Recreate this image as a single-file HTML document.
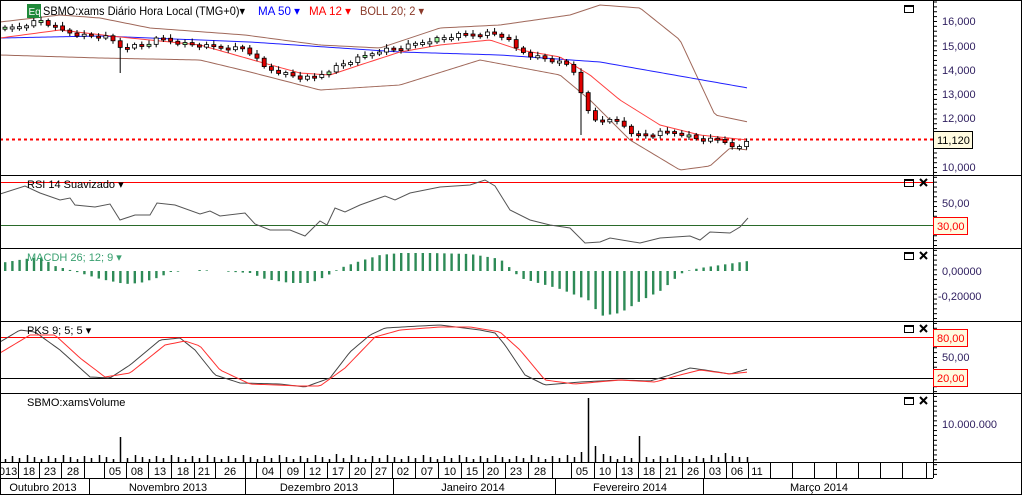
<!DOCTYPE html>
<html><head><meta charset="utf-8"><style>
html,body{margin:0;padding:0;background:#fff;width:1022px;height:495px;overflow:hidden}
svg{display:block;font-family:"Liberation Sans",sans-serif}
</style></head><body>
<svg id="s" width="1022" height="495" viewBox="0 0 1022 495" xmlns="http://www.w3.org/2000/svg">
<rect x="0" y="0" width="1022" height="495" fill="#fff"/>
<g id="g"></g>
<g stroke="#000" stroke-width="1" fill="none" shape-rendering="crispEdges">
<rect x="0.5" y="0.5" width="1021" height="494"/>
<line x1="933.5" y1="0" x2="933.5" y2="478"/>
<line x1="0" y1="175.5" x2="1022" y2="175.5"/>
<line x1="0" y1="248.5" x2="1022" y2="248.5"/>
<line x1="0" y1="321.5" x2="1022" y2="321.5"/>
<line x1="0" y1="393.5" x2="1022" y2="393.5"/>
<line x1="0" y1="462.5" x2="1022" y2="462.5"/>
<line x1="0" y1="478.5" x2="933" y2="478.5"/>
<line x1="0" y1="494.5" x2="933" y2="494.5"/>
</g>
<rect x="27" y="4" width="14" height="14" fill="#1f8a3a"/>
<text x="28.5" y="15" font-size="10" fill="#fff">Eq</text>
<text x="43" y="15" font-size="12" fill="#000" textLength="202" lengthAdjust="spacingAndGlyphs">SBMO:xams Diário Hora Local (TMG+0)▾</text>
<text x="258" y="15" font-size="12" fill="#0000ff" textLength="42" lengthAdjust="spacingAndGlyphs">MA 50 ▾</text>
<text x="309" y="15" font-size="12" fill="#ff0000" textLength="42" lengthAdjust="spacingAndGlyphs">MA 12 ▾</text>
<text x="360" y="15" font-size="12" fill="#8b3a2a" textLength="64" lengthAdjust="spacingAndGlyphs">BOLL 20; 2 ▾</text>
<text x="27" y="188" font-size="11" fill="#000">RSI 14 Suavizado ▾</text>
<text x="27" y="261" font-size="11" fill="#3aa070">MACDH 26; 12; 9 ▾</text>
<text x="27" y="334" font-size="11" fill="#000">PKS 9; 5; 5 ▾</text>
<text x="27" y="406" font-size="11" fill="#000">SBMO:xamsVolume</text>
<g fill="none" stroke="#000" stroke-width="1" shape-rendering="crispEdges">
<rect x="904.5" y="5.5" width="9" height="7"/><line x1="904" y1="6.5" x2="914" y2="6.5"/>
<rect x="904.5" y="179.5" width="9" height="7"/><line x1="904" y1="180.5" x2="914" y2="180.5"/>
<rect x="904.5" y="252.5" width="9" height="7"/><line x1="904" y1="253.5" x2="914" y2="253.5"/>
<rect x="904.5" y="325.5" width="9" height="7"/><line x1="904" y1="326.5" x2="914" y2="326.5"/>
<rect x="904.5" y="397.5" width="9" height="7"/><line x1="904" y1="398.5" x2="914" y2="398.5"/>
</g>
<g stroke="#000" stroke-width="2">
<path d="M920 179l7 7M927 179l-7 7"/><path d="M920 252l7 7M927 252l-7 7"/><path d="M920 325l7 7M927 325l-7 7"/><path d="M920 397l7 7M927 397l-7 7"/>
</g>
<g font-size="11" fill="#302060">
<text x="942" y="25">16,000</text><text x="942" y="50">15,000</text><text x="942" y="74">14,000</text>
<text x="942" y="98">13,000</text><text x="942" y="122">12,000</text><text x="942" y="171">10,000</text>
<text x="942" y="207">50,00</text>
<text x="942" y="275">0,00000</text><text x="938" y="300">-0,20000</text>
<text x="942" y="361">50,00</text>
<text x="942" y="428">10.000.000</text>
</g>
<rect x="933.5" y="131.5" width="39" height="17" fill="#fffbe0" stroke="#000"/>
<text x="937" y="144" font-size="11" fill="#000">11,120</text>
<rect x="933.5" y="217.5" width="34" height="17" fill="#fffbe0" stroke="#f00"/>
<text x="937" y="230" font-size="11" fill="#f00">30,00</text>
<rect x="933.5" y="329.5" width="34" height="17" fill="#fffbe0" stroke="#f00"/>
<text x="937" y="342" font-size="11" fill="#f00">80,00</text>
<rect x="933.5" y="369.5" width="34" height="17" fill="#fffbe0" stroke="#f00"/>
<text x="937" y="382" font-size="11" fill="#f00">20,00</text>
<g font-size="11" fill="#000" text-anchor="middle">
<text x="8" y="475">013</text><text x="29" y="475">18</text><text x="50" y="475">23</text><text x="73" y="475">28</text>
<text x="115" y="475">05</text><text x="137" y="475">08</text><text x="160" y="475">13</text><text x="183" y="475">18</text>
<text x="204" y="475">21</text><text x="230" y="475">26</text><text x="268" y="475">04</text><text x="293" y="475">09</text>
<text x="315" y="475">12</text><text x="338" y="475">17</text><text x="360" y="475">20</text><text x="381" y="475">27</text>
<text x="403" y="475">02</text><text x="427" y="475">07</text><text x="450" y="475">10</text><text x="472" y="475">15</text>
<text x="493" y="475">20</text><text x="516" y="475">23</text><text x="540" y="475">28</text><text x="582" y="475">05</text>
<text x="605" y="475">10</text><text x="627" y="475">13</text><text x="649" y="475">18</text><text x="671" y="475">21</text>
<text x="693" y="475">26</text><text x="715" y="475">03</text><text x="737" y="475">06</text><text x="757" y="475">11</text>
<text x="43" y="491">Outubro 2013</text><text x="168" y="491">Novembro 2013</text><text x="319" y="491">Dezembro 2013</text>
<text x="473" y="491">Janeiro 2014</text><text x="630" y="491">Fevereiro 2014</text><text x="819" y="491">Março 2014</text>
</g>
<g stroke="#000" shape-rendering="crispEdges">
<line x1="89.5" y1="478" x2="89.5" y2="494"/><line x1="245.5" y1="478" x2="245.5" y2="494"/>
<line x1="393.5" y1="478" x2="393.5" y2="494"/><line x1="555.5" y1="478" x2="555.5" y2="494"/>
<line x1="703.5" y1="478" x2="703.5" y2="494"/>
</g>
</svg>
<script>
(function(){
var NS="http://www.w3.org/2000/svg",g=document.getElementById("g");
function el(t,a){var e=document.createElementNS(NS,t);for(var k in a)e.setAttribute(k,a[k]);g.appendChild(e);return e;}
function interp(pts,x){for(var j=1;j<pts.length;j++){if(x<=pts[j][0]){var a=pts[j-1],b=pts[j];return a[1]+(b[1]-a[1])*(x-a[0])/(b[0]-a[0]);}}return pts[pts.length-1][1];}
function line(pts,col,w){el("polyline",{points:pts.map(function(p){return p.join(",")}).join(" "),fill:"none",stroke:col,"stroke-width":w||1});}
function smooth(pts,col,w){var a=[];for(var x=0;x<=748;x+=3)a.push([x,interp(pts,x)]);line(a,col,w);}
var sx=[18,39,61,84,104,126,148,171,194,215,245,256,280,304,327,349,371,392,415,438,461,483,505,528,552,571,594,616,638,660,682,704,726,748,770,792,814,836,858,880,902,926];
sx.forEach(function(x){el("line",{x1:x+.5,y1:462,x2:x+.5,y2:478,stroke:"#000","shape-rendering":"crispEdges"});});
var cl=[[0,30],[20,26],[40,20],[60,30],[80,35],[100,37],[110,38],[118,47],[130,46],[145,45],[160,38],[180,43],[200,46],[230,48],[245,48],[255,58],[265,68],[280,72],[300,78],[315,78],[325,72],[340,65],[360,58],[380,50],[400,48],[430,40],[460,35],[490,33],[505,37],[515,48],[530,55],[550,60],[570,66],[578,78],[585,108],[595,120],[620,122],[635,135],[650,135],[665,132],[680,133],[700,140],[720,140],[740,148],[748,140]];
el("line",{x1:0,y1:139.5,x2:933,y2:139.5,stroke:"#f00","stroke-width":2,"stroke-dasharray":"3,3"});
smooth([[0,22],[60,15],[100,18],[150,28],[245,35],[320,45],[380,48],[440,28],[500,25],[570,15],[600,5],[640,8],[680,40],[715,115],[748,122]],"#a0685a");
smooth([[0,55],[100,58],[200,60],[250,72],[320,90],[400,85],[480,60],[560,75],[590,100],[630,140],[680,170],[710,166],[730,148],[748,150]],"#a0685a");
smooth([[0,38],[100,36],[250,42],[400,52],[500,55],[600,62],[748,88]],"#2020ff");
smooth([[0,38],[60,30],[120,37],[200,45],[260,62],[300,73],[330,75],[360,65],[400,52],[440,45],[490,40],[520,50],[560,57],[590,75],[620,100],[660,125],[700,135],[748,140]],"#ff4040");
var prev=interp(cl,0)-2,i,x,cy,o,tp,h;
for(i=0;i<104;i++){x=5+i*7.2;if(x>750)break;cy=interp(cl,x)+((i*37)%7-3)*0.6;o=prev;tp=Math.min(o,cy);h=Math.max(Math.abs(cy-o),2);
el("line",{x1:x,y1:tp-2-(i%3),x2:x,y2:tp+h+2+(i%2),stroke:"#000"});
if(x>115&&x<121){el("line",{x1:x,y1:tp,x2:x,y2:73,stroke:"#000"});}
if(x>580&&x<588){el("line",{x1:x,y1:tp,x2:x,y2:135,stroke:"#000"});}
el("rect",{x:x-2,y:tp,width:4,height:h,fill:cy>o?"#e00000":(i%5==0?"#a0ffa0":"#fff"),stroke:"#000","stroke-width":0.8});prev=cy;}
el("line",{x1:0,y1:182.5,x2:933,y2:182.5,stroke:"#f00"});
el("line",{x1:0,y1:225.5,x2:933,y2:225.5,stroke:"#2a6a2a"});
line([[0,194],[25,186],[40,193],[60,200],[70,198],[75,205],[95,207],[110,204],[120,220],[135,215],[150,215],[157,203],[175,205],[200,214],[210,211],[220,216],[245,213],[255,224],[270,230],[290,230],[305,236],[320,221],[327,225],[335,208],[345,212],[360,205],[385,196],[395,200],[410,193],[440,187],[470,185],[485,180],[495,186],[510,210],[530,220],[550,225],[570,228],[585,243],[600,242],[610,238],[640,243],[660,238],[690,236],[700,240],[710,232],[730,233],[740,227],[748,218]],"#555");
var mh=[[0,-8],[25,-12],[40,-14],[55,-5],[70,-1],[80,2],[100,8],[125,13],[140,12],[160,6],[170,1],[192,0],[200,-1],[250,2],[265,8],[290,12],[310,12],[320,8],[330,3],[340,-3],[360,-10],[380,-16],[400,-18],[430,-18],[470,-17],[500,-12],[510,-3],[520,7],[560,18],[590,30],[600,45],[620,42],[640,30],[660,20],[670,12],[680,3],[690,-1],[700,-3],[748,-10]];
for(i=0;i<104;i++){x=5+i*7.2;if(x>750)break;var v=interp(mh,x);if(Math.abs(v)<0.5)continue;el("rect",{x:x-1,y:Math.min(271,271+v),width:2.4,height:Math.abs(v),fill:"#2e8b57"});}
el("line",{x1:0,y1:337.5,x2:933,y2:337.5,stroke:"#f00"});
el("line",{x1:0,y1:378.5,x2:933,y2:378.5,stroke:"#000"});
smooth([[0,342],[20,330],[35,332],[60,350],[90,377],[110,378],[130,365],[160,340],[180,338],[195,350],[215,375],[240,383],[280,384],[305,387],[330,378],[350,352],[370,335],[385,328],[420,326],[440,325],[480,330],[495,333],[505,345],[525,375],[545,385],[580,382],[620,380],[650,381],[670,375],[690,368],[705,370],[730,374],[748,369]],"#444");
smooth([[0,353],[30,335],[55,335],[80,358],[105,377],[130,373],[165,345],[185,341],[200,346],[220,370],[250,384],[300,386],[320,386],[345,368],[375,337],[400,330],[440,327],[470,327],[500,332],[520,350],[545,380],[575,384],[620,380],[655,382],[680,375],[700,370],[730,374],[748,372]],"#ff3030");
for(i=0;i<104;i++){x=5+i*7.2;if(x>750)break;h=3+((i*13)%5);if(i==16)h=25;if(i>=80&&i<=84)h=[10,64,16,8,6][i-80];if(i==88)h=26;if(i==46)h=8;if(i>=99)h=[5,9,6,5][i-99]||5;
el("line",{x1:Math.round(x)+.5,y1:462,x2:Math.round(x)+.5,y2:462-h,stroke:"#000","stroke-width":1.5});}
for(var y=2;y<478;y+=4.87){el("line",{x1:933,y1:y,x2:937,y2:y,stroke:"#000"});}
})();
</script>
</body></html>
